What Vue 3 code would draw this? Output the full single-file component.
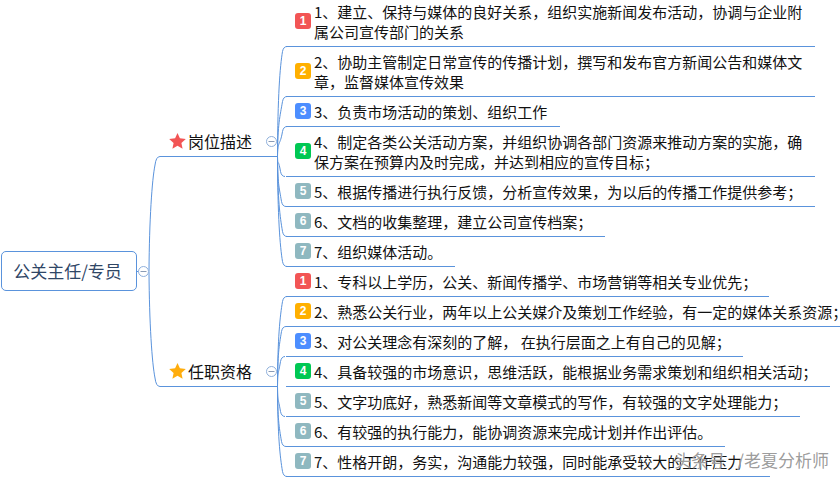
<script setup>
const badgeColors = { 1: '#f25555', 2: '#ffb000', 3: '#4d8eff', 4: '#00c853', 5: '#8fb8c0', 6: '#8fb8c0', 7: '#8fb8c0' }

const rows = [
  { n: 1, end: 815, lines: ['1、建立、保持与媒体的良好关系，组织实施新闻发布活动，协调与企业附', '属公司宣传部门的关系'] },
  { n: 2, end: 815, lines: ['2、协助主管制定日常宣传的传播计划，撰写和发布官方新闻公告和媒体文', '章，监督媒体宣传效果'] },
  { n: 3, end: 560, lines: ['3、负责市场活动的策划、组织工作'] },
  { n: 4, end: 815, lines: ['4、制定各类公关活动方案，并组织协调各部门资源来推动方案的实施，确', '保方案在预算内及时完成，并达到相应的宣传目标；'] },
  { n: 5, end: 815, lines: ['5、根据传播进行执行反馈，分析宣传效果，为以后的传播工作提供参考；'] },
  { n: 6, end: 605, lines: ['6、文档的收集整理，建立公司宣传档案；'] },
  { n: 7, end: 455, lines: ['7、组织媒体活动。'] },
  { n: 1, end: 769, lines: ['1、专科以上学历，公关、新闻传播学、市场营销等相关专业优先；'] },
  { n: 2, end: 840, lines: ['2、熟悉公关行业，两年以上公关媒介及策划工作经验，有一定的媒体关系资源；'] },
  { n: 3, end: 743, lines: ['3、对公关理念有深刻的了解， 在执行层面之上有自己的见解；'] },
  { n: 4, end: 830, lines: ['4、具备较强的市场意识，思维活跃，能根据业务需求策划和组织相关活动；'] },
  { n: 5, end: 800, lines: ['5、文字功底好，熟悉新闻等文章模式的写作，有较强的文字处理能力；'] },
  { n: 6, end: 725, lines: ['6、有较强的执行能力，能协调资源来完成计划并作出评估。'] },
  { n: 7, end: 770, lines: ['7、性格开朗，务实，沟通能力较强，同时能承受较大的工作压力'] }
]

function curve(x0, y0, y, x1) {
  const s = y < y0 ? -1 : 1
  const d = y - y0
  return `M${x0} ${y0} C${x0 + 0.2} ${y0 + d * 0.55} ${x1 - 5} ${y - s * 20} ${x1 - 2.5} ${y - s * 5} Q${x1 - 1.5} ${y} ${x1 + 2} ${y}`
}

const branchPaths = [
  [156.5, [[46.5, 285], [96.5, 285], [126.5, 285], [176.5, 283], [206.5, 284], [236.5, 285], [266.5, 285]]],
  [386.5, [[296.5, 285], [326.5, 284], [356.5, 283], [416.5, 283], [446.5, 284], [476.5, 285]]]
].flatMap(([y0, list]) => list.map(([y, x]) => curve(277.5, y0, y, x)))

const trunkPaths = [
  'M149 271.5 C149.3 220 152 180 155 165 Q156 156.5 160 156.5 H278',
  'M149 271.5 C149.3 323 152 363 155 378 Q156 386.5 160 386.5 H278'
]
const toggles = [[143.5, 271.5], [271.5, 141.5], [271.5, 371.5]]
</script>

<template>
  <div class="map">
    <svg class="wires" width="840" height="478" viewBox="0 0 840 478">
      <path d="M137 271.5 H139" class="wire" />
      <path v-for="(d, i) in trunkPaths" :key="'t' + i" :d="d" class="wire" />
      <path v-for="(d, i) in branchPaths" :key="'b' + i" :d="d" class="wire" />
      <g v-for="(t, i) in toggles" :key="'g' + i">
        <circle :cx="t[0]" :cy="t[1]" r="5" class="toggle" />
        <path :d="`M${t[0] - 3} ${t[1]} H${t[0] + 3}`" class="toggle-bar" />
      </g>
    </svg>

    <div class="root-col">
      <div class="root-node">公关主任/专员</div>
    </div>

    <div class="branch-col">
      <div class="branch first">
        <svg width="17" height="16" viewBox="0 0 17 16"><path d="M8.5 0 L10.9 5.3 L16.8 6 L12.4 9.9 L13.6 15.7 L8.5 12.8 L3.4 15.7 L4.6 9.9 L.2 6 L6.1 5.3 Z" fill="#f25555" /></svg>
        <span>岗位描述</span>
      </div>
      <div class="branch second">
        <svg width="17" height="16" viewBox="0 0 17 16"><path d="M8.5 0 L10.9 5.3 L16.8 6 L12.4 9.9 L13.6 15.7 L8.5 12.8 L3.4 15.7 L4.6 9.9 L.2 6 L6.1 5.3 Z" fill="#ffad0d" /></svg>
        <span>任职资格</span>
      </div>
    </div>

    <div class="rows">
      <div v-for="(r, i) in rows" :key="i" class="row" :style="{ width: r.end - 286 + 'px' }">
        <span class="badge" :style="{ background: badgeColors[r.n] }">{{ r.n }}</span>
        <div class="text">
          <div v-for="(l, j) in r.lines" :key="j">{{ l }}</div>
        </div>
      </div>
    </div>

    <div class="watermark"><span class="wm-head">头条号</span>/老夏分析师</div>
  </div>
</template>

<style>
html, body { margin: 0; background: #fff; }
</style>

<style scoped>
.map {
  position: relative;
  display: flex;
  width: 840px;
  height: 478px;
  overflow: hidden;
  background: #fff;
  font-family: "Noto Sans CJK SC", "Liberation Sans", sans-serif;
}
.wires { position: absolute; left: 0; top: 0; pointer-events: none; }
.wire { fill: none; stroke: #5a93dc; stroke-width: 1; }
.toggle { fill: #fff; stroke: #8fb0dc; stroke-width: 1; }
.toggle-bar { stroke: #8a9bb5; stroke-width: 1; }
.root-col { width: 169px; flex: none; padding: 251px 0 0 1px; box-sizing: border-box; }
.root-node {
  position: relative;
  width: 136px;
  height: 40px;
  box-sizing: border-box;
  border: 1px solid #5a93dc;
  border-radius: 5px;
  background: #fff;
  display: flex;
  align-items: center;
  justify-content: center;
  padding: 0 3px 2px 0;
  font-size: 17px;
  color: #2f4666;
}
.branch-col { width: 117px; flex: none; position: relative; }
.branch {
  display: flex;
  align-items: center;
  gap: 2px;
  height: 22px;
  font-size: 16px;
  line-height: 22px;
  color: #111;
}
.branch.first { margin-top: 130px; }
.branch.second { margin-top: 208px; }
.rows { flex: none; margin-top: -3px; position: relative; }
.row {
  display: flex;
  align-items: center;
  min-height: 30px;
  box-sizing: border-box;
  padding: 4px 0 5px 9px;
  border-bottom: 1px solid #5a93dc;
}
.badge {
  flex: none;
  width: 16px;
  height: 16px;
  border-radius: 3px;
  margin-right: 3px;
  color: #fff;
  font: bold 12px/16px "Liberation Sans", sans-serif;
  text-align: center;
}
.text {
  margin: 1px 0 -1px;
  font-size: 15px;
  line-height: 20px;
  color: #111;
  white-space: nowrap;
}
.watermark {
  position: absolute;
  right: 11px;
  top: 449px;
  font-size: 17px;
  line-height: 22px;
  color: rgba(130, 130, 130, 0.8);
  text-shadow: 0 0 1px #fff;
  white-space: nowrap;
}
.wm-head { margin-right: 12px; }
</style>
